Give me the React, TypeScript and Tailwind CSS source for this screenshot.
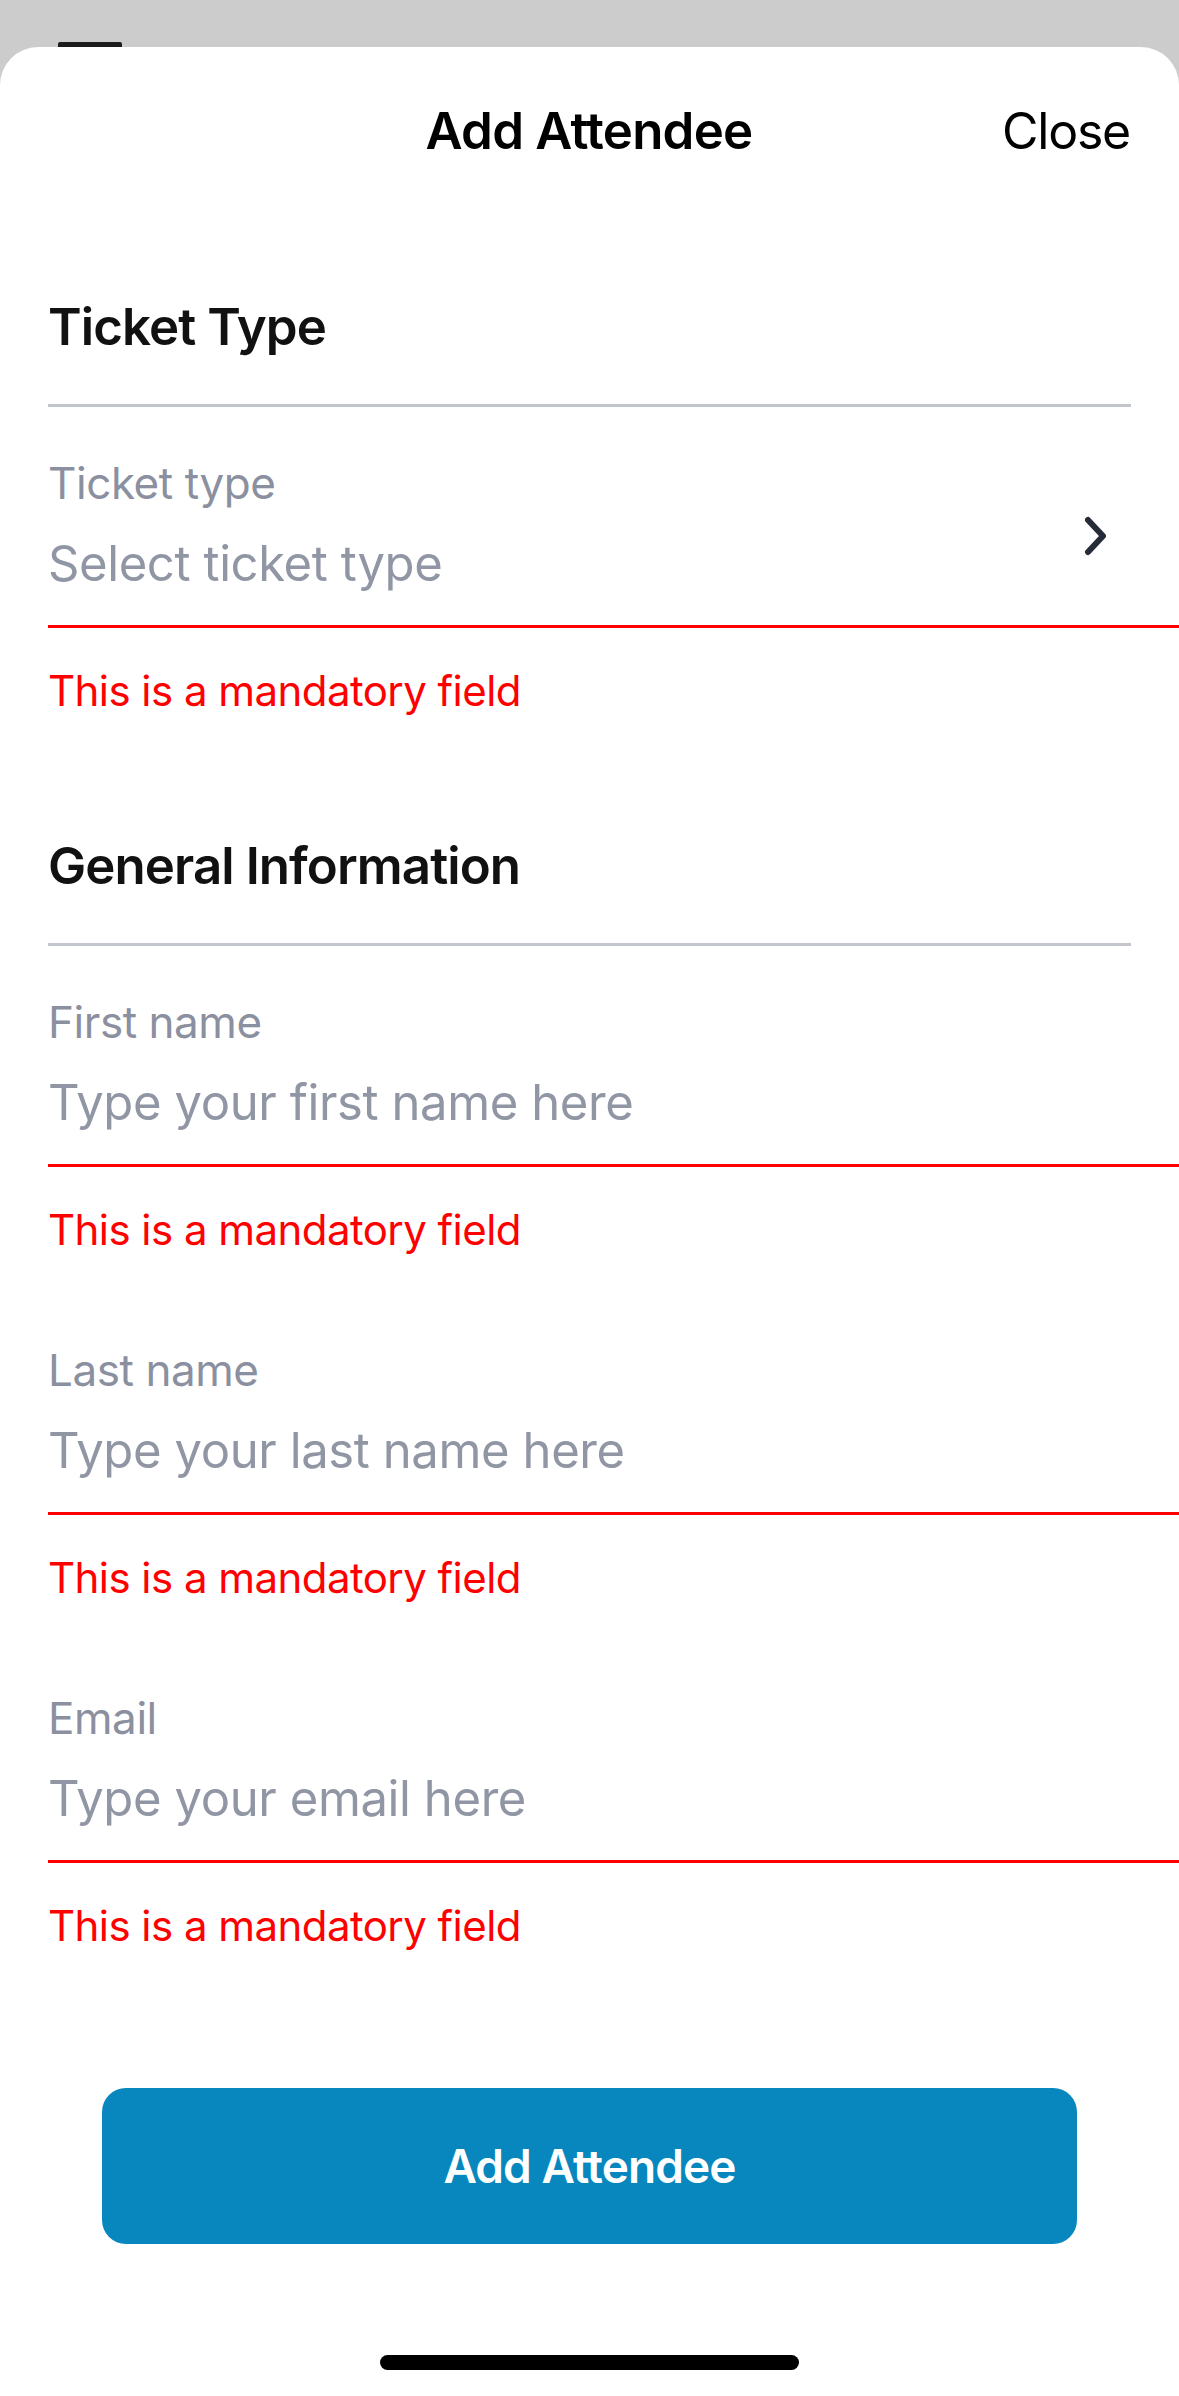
import React from "react";

const FONT = { fontFamily: "Inter, 'Noto Sans', 'Liberation Sans', sans-serif" };

function Field({
  label,
  placeholder,
  chevron = false,
}: {
  label: string;
  placeholder: string;
  chevron?: boolean;
}) {
  return (
    <div className="flex flex-col pl-[48px]">
      <div className="flex items-center pr-[70px]">
        <div className="flex flex-1 flex-col">
          <div className="h-[50px] text-[44px] leading-[50px] tracking-[-0.01em] text-[#8b90a0]">{label}</div>
          <div className="mt-[26px] h-[60px] text-[49px] leading-[60px] tracking-[-0.008em] text-[#9096a4]">
            {placeholder}
          </div>
        </div>
        {chevron && (
          <div className="pt-[20px]">
            <svg width="26" height="40" viewBox="0 0 26 40" fill="none">
              <polyline
                points="5,4 20,20 5,36"
                stroke="#262b3a"
                strokeWidth="6"
                strokeLinecap="round"
                strokeLinejoin="round"
              />
            </svg>
          </div>
        )}
      </div>
      <div className="mt-[31px] h-[3px] bg-[#ff0000]" />
      <div className="mt-[38px] h-[50px] text-[42px] leading-[50px] tracking-[-0.013em] text-[#ff0000]">
        This is a mandatory field
      </div>
    </div>
  );
}

function SectionHeading({ title }: { title: string }) {
  return (
    <div className="flex flex-col px-[48px]">
      <div className="h-[60px] text-[51px] font-semibold leading-[60px] tracking-[-0.018em] text-[#111111]">
        {title}
      </div>
      <div className="mt-[47px] h-[3px] bg-[#c3c5cc]" />
    </div>
  );
}

export default function App() {
  return (
    <div className="flex h-[2396px] w-[1179px] flex-col overflow-hidden bg-[#cccccc]" style={FONT}>
      <div className="flex h-[47px] shrink-0 items-end pl-[58px]">
        <div className="h-[5px] w-[64px] rounded-t-[2px] bg-[#1c1c1c]" />
      </div>
      <div className="flex flex-1 flex-col rounded-t-[38px] bg-white">
        <div className="grid h-[168px] grid-cols-[1fr_auto_1fr] items-center pl-[48px] pr-[49px]">
          <div />
          <div className="text-[51px] font-semibold tracking-[-0.015em] text-black">Add Attendee</div>
          <div className="justify-self-end text-[50px] tracking-[-0.025em] text-black">Close</div>
        </div>

        <div className="mt-[82px]">
          <SectionHeading title="Ticket Type" />
        </div>
        <div className="mt-[51px]">
          <Field label="Ticket type" placeholder="Select ticket type" chevron />
        </div>

        <div className="mt-[120px]">
          <SectionHeading title="General Information" />
        </div>
        <div className="mt-[51px]">
          <Field label="First name" placeholder="Type your first name here" />
        </div>
        <div className="mt-[90px]">
          <Field label="Last name" placeholder="Type your last name here" />
        </div>
        <div className="mt-[90px]">
          <Field label="Email" placeholder="Type your email here" />
        </div>

        <div className="mt-[137px] flex px-[102px]">
          <div className="flex h-[156px] flex-1 items-center justify-center rounded-[24px] bg-[#0787bd] text-[46px] font-semibold tracking-[-0.02em] text-white">
            Add Attendee
          </div>
        </div>

        <div className="mt-[111px] flex justify-center">
          <div className="h-[15px] w-[419px] rounded-full bg-black" />
        </div>
      </div>
    </div>
  );
}
